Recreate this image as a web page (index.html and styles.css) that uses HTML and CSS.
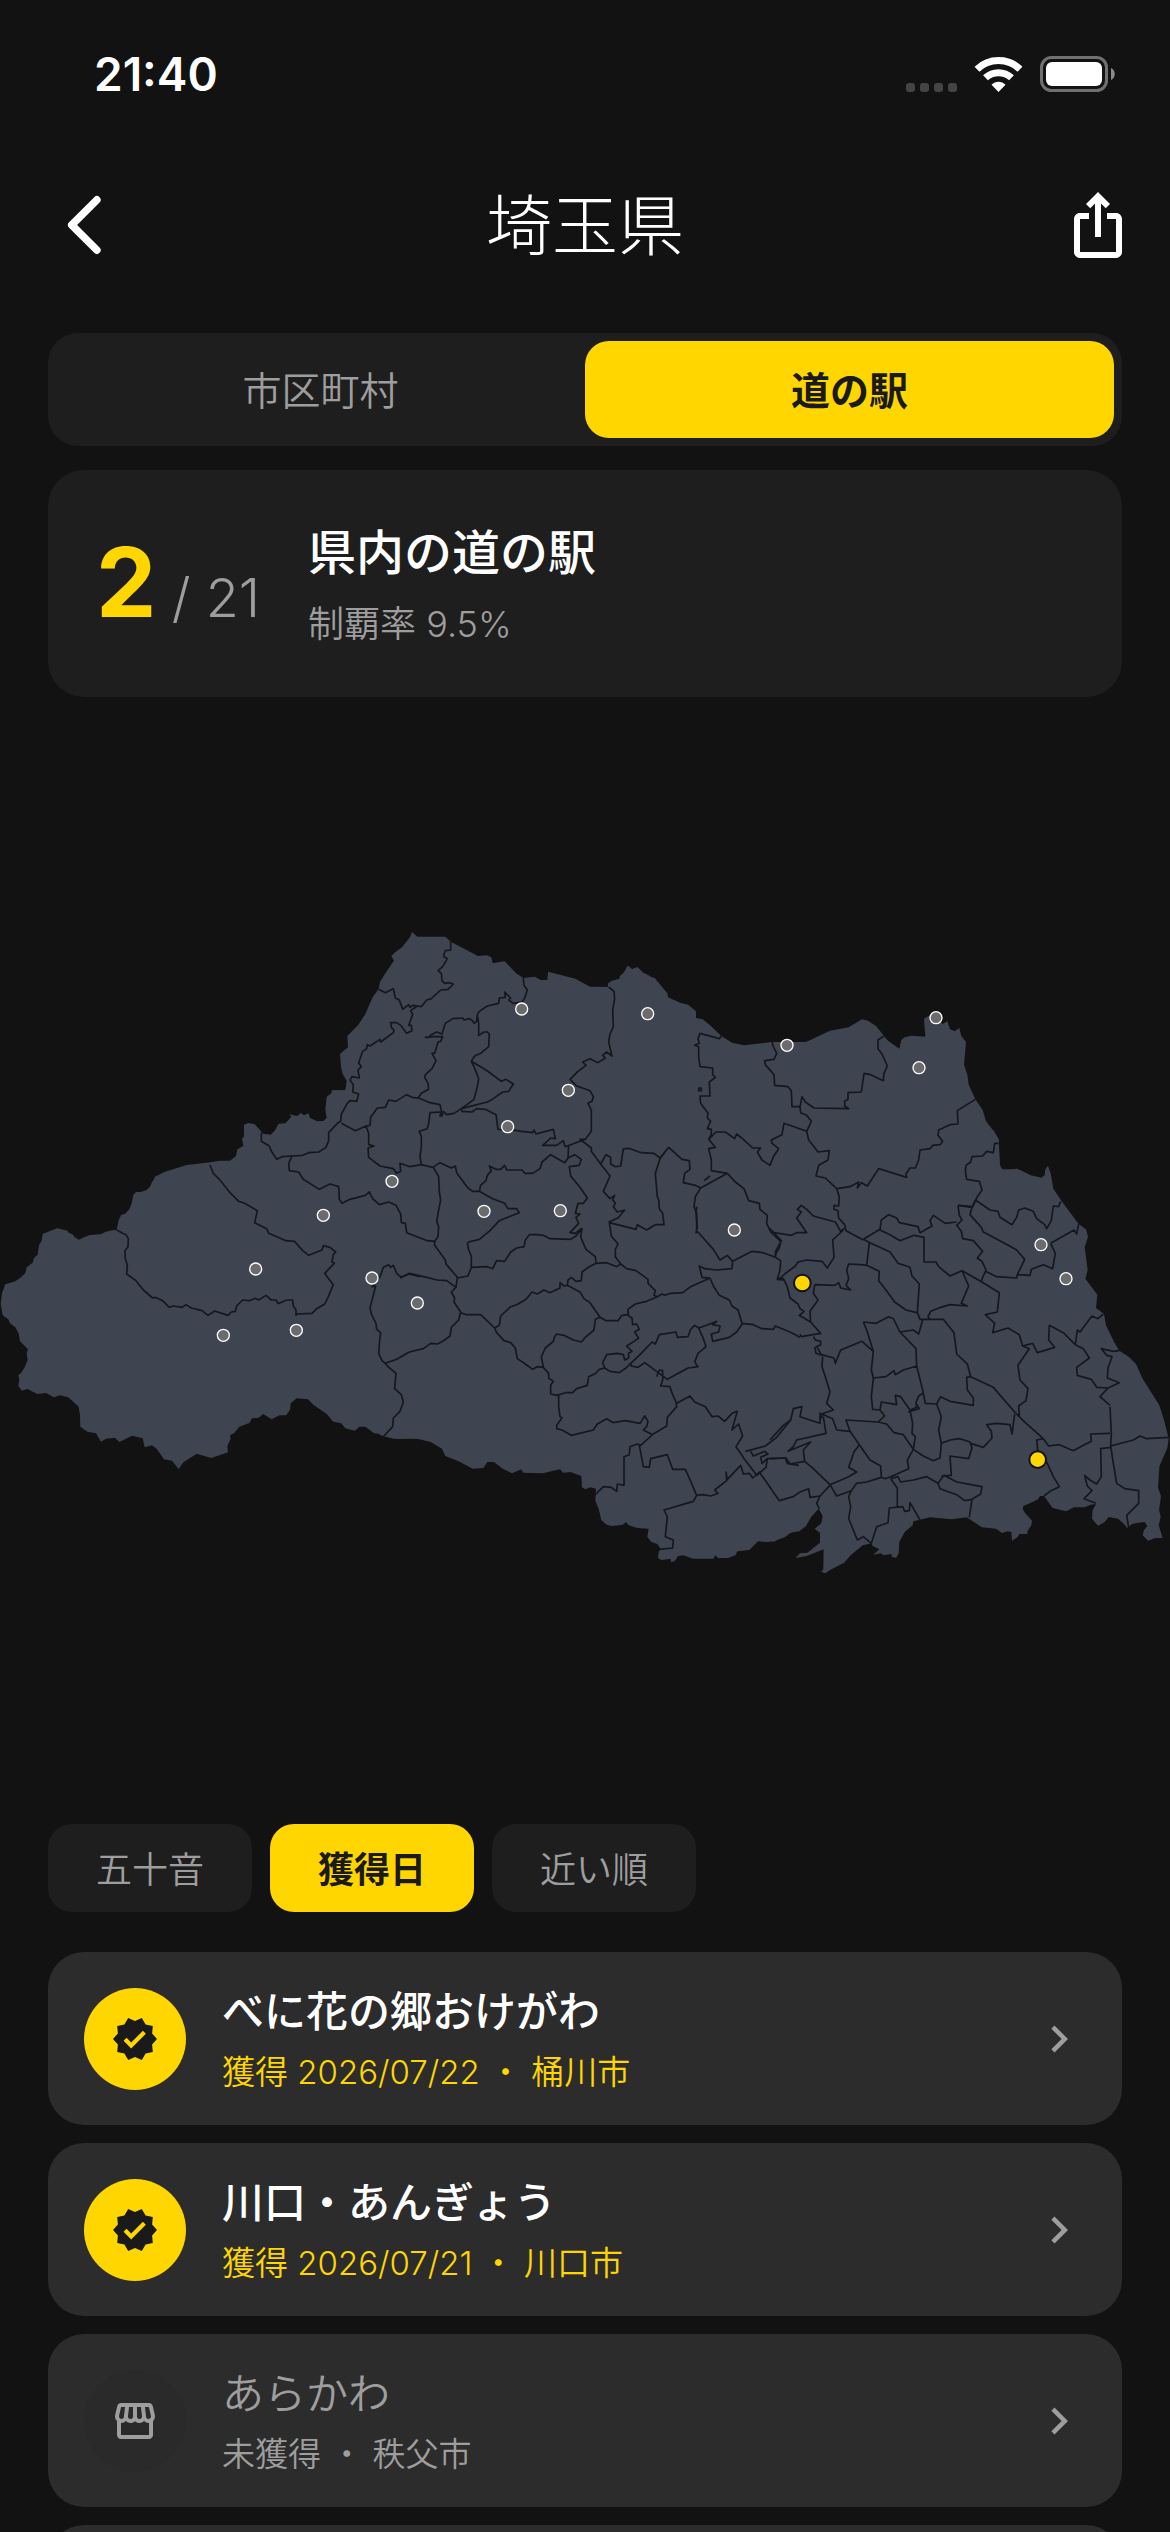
FILE: index.html
```
<!DOCTYPE html>
<html lang="ja">
<head>
  <meta charset="UTF-8">
  <meta name="viewport" content="width=device-width, initial-scale=1.0">
  <title>埼玉県</title>
  <link rel="stylesheet" href="styles.css">
</head>
<body>
  <div class="app">
    <div class="status-bar">
      <span class="time">21:40</span>
      <div class="status-icons">
        <svg class="dots" viewBox="0 0 51 36">
          <rect x="0" y="27" width="9" height="9" rx="3"/>
          <rect x="14" y="27" width="9" height="9" rx="3"/>
          <rect x="28" y="27" width="9" height="9" rx="3"/>
          <rect x="42" y="27" width="9" height="9" rx="3"/>
        </svg>
        <svg class="wifi" viewBox="0 0 49 36">
          <path d="M3 13.200A31 31 0 0 1 46 13.200" stroke-width="7"/>
          <path d="M11.500 21.800A19 19 0 0 1 37.500 21.800" stroke-width="7"/>
          <path class="solid" d="M24.500 36l-7-7.200c3.800-4.200 10.200-4.200 14 0z"/>
        </svg>
        <svg class="battery" viewBox="0 0 76 36">
          <rect class="shell" x="1.500" y="1.500" width="65" height="33" rx="10"/>
          <rect x="6" y="6" width="56" height="24" rx="6" fill="#fff"/>
          <path d="M71 12c5 2 5 10 0 12z" fill="#8a8a8a"/>
        </svg>
      </div>
    </div>

    <header class="header">
      <button class="icon-btn" aria-label="戻る">
        <svg viewBox="0 0 24 24"><path class="chevron" d="M16.300 3.600L7.900 12l8.400 8.400"/></svg>
      </button>
      <h1>埼玉県</h1>
      <button class="icon-btn share" aria-label="共有">
        <svg viewBox="0 0 24 24"><path fill="#fff" d="M16 5l-1.420 1.420-1.590-1.590V16h-1.980V4.830L9.420 6.420 8 5l4-4 4 4zm4 5v11c0 1.100-.9 2-2 2H6c-1.110 0-2-.9-2-2V10c0-1.110.89-2 2-2h3v2H6v11h12V10h-3V8h3c1.100 0 2 .89 2 2z"/></svg>
      </button>
    </header>

    <div class="tabs">
      <button class="tab">市区町村</button>
      <button class="tab active">道の駅</button>
    </div>

    <section class="summary">
      <p class="count"><strong>2</strong> / 21</p>
      <div>
        <h2>県内の道の駅</h2>
        <p class="rate">制覇率 9.5%</p>
      </div>
    </section>

    <svg class="map" viewBox="0 0 3510 3381" role="img" aria-label="埼玉県の地図">
      <g class="land">
        <path transform="translate(0 1449)" d="M460 0 455 8 450 20 440 30 422 36 408 36 400 45 395 70 388 88 375 102 364 104 356 120 350 150 337 151 318 155 302 163 270 165 252 172 237 179 224 172 218 163 206 158 202 152 172 145 150 153 128 162 125 182 117 195 113 224 102 234 98 248 80 262 76 279 63 292 46 304 16 313 6 340 2 372 8 406 25 418 30 430 46 442 56 460 60 484 84 508 80 520 83 540 74 562 64 578 55 586 58 600 55 618 66 632 82 627 112 642 138 639 162 652 180 646 205 652 236 680 240 705 241 740 262 755 288 760 303 785 318 776 345 773 358 786 396 767 428 775 434 802 456 796 470 806 492 838 516 842 536 867 550 847 590 821 634 834 684 817 682 798 692 776 690 766 702 760 718 740 748 729 756 715 776 713 790 702 815 718 838 706 858 706 870 690 872 670 890 655 924 658 940 674 980 702 1000 725 1024 730 1036 745 1064 752 1078 740 1096 740 1122 760 1140 762 1152 768 1196 777 1230 774 1260 777 1260 0Z"/>
        <path transform="translate(690 639)" d="M-230 812 -225 800 -195 785 -130 765 -70 758 -30 752 0 752 18 738 22 718 40 708 36 686 42 680 42 644 56 639 74 643 90 660 98 671 122 674 134 662 146 641 166 640 184 620 178 612 190 616 202 618 212 609 222 616 236 610 240 624 262 634 280 633 290 624 286 600 290 560 304 550 306 541 346 540 350 512 338 492 333 470 330 432 344 420 354 412 352 378 385 344 405 314 428 262 446 236 450 216 470 184 492 152 484 138 494 128 516 112 530 94 540 82 546 66 562 80 646 80 662 95 744 138 770 136 784 142 788 160 824 154 858 190 880 204 914 200 932 210 952 210 954 185 1036 206 1080 230 1136 231 1144 220 1168 208 1190 174 1196 168 1206 178 1222 172 1240 188 1260 198 1260 1020 -230 1020Z"/>
        <path transform="translate(1800 699)" d="M0 172 24 170 24 160 36 152 58 146 60 138 74 126 82 108 96 118 112 112 134 134 164 144 202 190 204 202 240 218 264 224 288 244 288 264 308 268 330 286 364 318 396 338 432 346 516 336 618 336 690 302 746 292 786 268 804 272 828 288 852 318 864 332 898 356 904 330 914 322 934 317 976 320 972 266 990 256 1008 262 1028 282 1042 274 1050 298 1064 304 1078 294 1084 318 1098 336 1092 404 1102 434 1106 464 1126 508 1148 540 1158 574 1174 594 1196 628 1200 706 1208 720 1252 716 1290 738 1320 742 1320 990 0 990Z"/>
        <path transform="translate(1140 1509)" d="M0 705 40 716 112 716 152 726 186 746 196 768 236 784 278 806 310 804 322 786 342 786 368 806 396 820 424 808 430 818 488 820 540 808 550 818 572 816 604 828 606 862 616 868 632 862 648 866 646 902 656 926 664 960 680 974 696 978 728 974 738 966 746 976 772 984 806 986 802 1010 814 1026 832 1032 842 1046 836 1056 834 1074 844 1080 872 1076 872 1086 884 1084 894 1068 910 1066 940 1076 1000 1076 1006 1066 1014 1074 1044 1074 1066 1066 1072 1054 1108 1050 1134 1024 1160 1026 1180 1024 1214 1012 1230 1000 1260 990 1260 0 0 0Z"/>
        <path transform="translate(2310 1299)" d="M670 0 686 28 688 104 696 118 750 120 782 136 814 143 824 136 826 118 834 108 842 130 850 176 874 212 926 282 948 298 954 320 944 352 953 420 946 446 982 494 978 534 1002 552 1008 586 1032 636 1048 662 1076 680 1098 702 1118 746 1168 826 1182 870 1196 926 1192 954 1172 1000 1168 1010 1164 1074 1173 1098 1167 1140 1172 1160 1166 1186 1178 1224 1156 1224 1134 1232 1118 1216 1122 1200 1132 1188 1124 1176 1106 1178 1086 1182 1072 1194 1058 1178 1044 1166 1016 1161 1004 1176 984 1187 966 1166 968 1140 978 1122 962 1124 944 1132 912 1132 888 1144 848 1134 822 1098 810 1098 804 1108 788 1116 760 1128 758 1138 766 1150 786 1172 784 1186 772 1204 772 1212 748 1212 742 1222 726 1232 724 1206 712 1204 696 1209 678 1196 636 1192 590 1162 544 1168 480 1162 430 1174 428 1186 404 1206 388 1236 386 1270 378 1284 366 1280 364 1272 340 1276 332 1270 310 1274 328 1258 308 1248 304 1240 278 1246 242 1276 222 1298 180 1320 166 1330 154 1326 160 1316 161 1258 110 1278 76 1284 90 1270 112 1268 150 1238 150 1208 134 1196 154 1180 158 1158 146 1136 124 1160 108 1188 88 1204 64 1206 36 1222 10 1236 0 1228 0 0Z"/>
      </g>

      <g class="borders">
        <!-- chichibu side -->
        <path transform="translate(0 1449)" d="M350 150 368 160 378 164 385 176 384 200 375 212 376 236 382 256 380 282 408 302 430 330 458 354 466 352 488 362 508 382 520 378 546 382 558 374 574 384 606 392 624 406 644 393 684 406 694 396 706 394 710 378 728 360 748 362 766 355 776 360 798 346 814 360 828 360 834 371 860 360 878 360 880 378 888 390 888 406 892 402 936 400 950 386 974 372 984 352 1000 314 986 296 974 280 1003 250 996 246 1000 224 1007 216 990 202 970 197 966 210 926 226 908 212 884 184 858 182 806 160 800 146 764 128 772 92 734 70 716 64 690 38 660 0 640 -20 630 -45
          M1260 290 1228 282 1204 292 1190 280 1180 256 1172 262 1166 254 1150 262 1140 290 1116 320 1127 318 1110 384 1114 402 1128 430 1130 448 1142 458 1139 480 1136 520 1146 542 1156 550 1164 560 1188 580 1184 626 1204 644 1210 666 1200 694 1180 714 1178 740 1152 768"/>
        <!-- north-west -->
        <path transform="translate(690 639)" d="M94 668 94 694 118 708 124 724 140 748 156 740 186 738 218 736 236 728 266 726 288 712 296 692 296 668 322 640 332 634 334 612 352 580 360 572 380 574 386 552 368 546 370 524 360 510 366 500 388 504 384 480 394 470 386 458 398 424 410 416 412 404 420 408 450 388 452 396 490 368 492 360 484 352 482 338 500 338 512 346 530 370 546 362 544 346 536 346 548 314 542 302 562 288
          M446 238 466 248 490 236 496 264 508 270 518 298 536 284 540 292 548 286 562 288 574 290 590 270 604 266 632 240 654 238 670 222 660 218 644 220 636 212 634 190 624 182 638 170 652 146 642 140 642 132 646 122 662 120 662 95
          M880 204 882 226 892 240 884 264 876 276 850 280 836 270 842 264 824 246 826 262 808 264 806 280 772 288 748 304 742 314 740 334 732 340 728 332 718 326 702 330 698 324 668 326 646 340 636 372 620 366 604 374 596 382 586 382 610 380 638 380 632 394 624 396 614 430 606 430 618 452 606 476 586 494 584 502 594 520 596 538 574 550 566 562
          M742 314 746 340 746 376 762 366 772 366 778 372 776 410 752 430 734 438 724 454 732 470 746 506 742 530 732 568 694 596 672 610 650 614 640 604 636 618 630 618 634 602 630 584 600 578 566 564 546 562 530 554 498 574 476 570 466 592 442 594 422 622 420 646 408 648 376 662 334 640
          M724 454 768 480 814 514 828 508 850 522 836 544 818 546 790 566 772 576 694 596 696 604 726 606 740 596 766 598 798 614 804 658 848 660 874 664 908 668 912 660 918 672 970 658 976 686 962 684 938 706 980 706 1000 692 1006 710 1066 688
          M408 648 416 670 416 704 432 708 414 714 416 742 450 768 490 776 500 790 512 784 510 760 540 770 574 764 608 772 630 758 664 774 676 768 680 788 712 832 728 844 748 844
          M636 618 630 606 600 608 596 640 592 656 568 664 574 680 574 710 570 740 574 764
          M748 844 752 826 768 812 772 796 784 782 778 768 798 778 812 778 824 766 830 780 876 780 884 790 908 790 930 776 936 756 962 734 1004 758 1014 744 1034 734 1054 748 1048 766 1018 770 1022 798 1050 832 1072 864 1060 880 1044 880 1036 910 1050 912 1038 922 1046 940 1020 968 1036 970 1054 956M1016 706 1014 744
          M1136 231 1152 244 1154 266 1148 300 1150 350 1140 372 1136 396 1146 438 1130 426 1118 436 1126 444 1104 458 1080 446 1058 456 1068 466 1044 484 1020 508 1040 528 1064 536 1080 542 1090 560 1086 574 1074 580 1084 600 1084 664 1066 688 1050 688 1084 714 1084 724 1112 762 1128 734 1142 742 1142 762 1156 770 1172 768 1180 716
          M1112 762 1140 798 1120 844 1140 866 1154 856 1148 870 1156 880 1150 890 1162 906 1184 900 1164 924 1136 936
          M186 738 176 760 178 782 206 786 220 808 268 838 300 822 326 830 328 868 336 880 360 868 406 856 418 846 428 866 448 884 476 876 498 886 512 912 514 938 526 940 530 968 592 992 614 994 624 980 626 950 620 934 626 900 632 870 628 846 626 800 610 772
          M748 844 788 866 824 880 834 896 860 896 868 908 808 932 780 962 748 988 716 996 712 1000"/>
        <!-- north -->
        <path transform="translate(1800 699)" d="M364 318 358 326 300 310 294 326 298 340 284 346 296 350 296 380 300 410 338 414 338 434 346 442 328 456 330 498 300 498 302 520 324 550 322 564 332 574 322 596 334 598 334 612 326 628 348 606 376 606 404 626 410 612 430 628 458 654 482 654 472 666 486 690 510 706 520 680 536 656 516 640 514 630 546 614 552 580 620 604
          M516 336 520 350 530 370 522 388 494 392 496 404 522 434 524 466 564 470 574 482 576 530 600 530 606 500 616 516 642 534 746 536 734 528 734 514 744 508 744 488 784 486 792 430 812 434 850 452 852 430 862 408 846 372 834 356 834 330 852 318
          M600 530 602 548 620 556 634 574 620 604 626 630 654 666 688 662 684 690 656 706 648 738 676 744 710 776 718 800 716 828 702 826 702 838 714 842 716 864 734 884 738 902 790 930
          M326 628 346 652 326 656 334 690 334 722 382 730 406 756 432 776 446 812 478 820 480 838 502 856 500 880 512 906 542 934 538 954 524 976
          M382 730 302 774 286 766 250 758 254 730 270 718 268 692 246 688 206 652 180 686 166 730 172 800 176 810M302 774 286 800 282 830 290 850 290 900
          M70 656 90 656 124 668 162 670 180 684 206 652M312 752 330 738M296 474 304 474 304 482 296 482Z
          M710 776 750 770 776 756 772 774 784 758 802 768 836 716 920 742 918 732 930 714 946 714 956 690 960 660 990 656 998 646 1020 644 1028 634 1014 616 1016 600 1050 584 1074 582 1072 542 1126 508
          M1196 640 1184 640 1180 668 1160 664 1148 678 1116 680 1112 696 1098 706 1096 722 1100 748 1138 754 1146 780 1132 800 1118 830 1074 826
          M512 906 574 916 590 908 620 908 590 864 604 846 592 838 604 826 620 838 640 858 706 876 722 904 736 892"/>
        <!-- centre and south -->
        <path transform="translate(1140 1509)" d="M164 124 164 136 196 180 198 192 232 232 228 262 214 276 224 294 222 306 242 336 236 360 214 382 210 408 188 424 172 432 152 430 130 446 88 456 50 478 16 490
          M262 130 266 150 274 168 274 202 264 228 232 234M274 202 322 200 338 206 350 182 374 184 392 156 410 144 432 140 436 120 448 104 472 104 490 106 510 116 572 118 588 108 606 86 602 110 610 130 618 148 646 170 648 190
          M60 234 88 220 140 232 172 240 200 242 228 262
          M242 338 260 344 302 344 344 384 350 398 372 422 392 428 406 444 412 476 436 492 458 508 472 500 490 502
          M344 384 358 376 362 348 392 320 410 314 438 298 456 276 472 282 492 270 510 278 540 264 540 248 552 258 562 256 564 240 574 232 588 244 604 242 606 216 628 200 648 190 680 188 710 200 722 192
          M562 256 600 276 612 296 630 308 660 352 646 358 642 390 616 412 604 426 580 420 552 406 530 402 524 410 520 424 496 444 484 470 490 502 506 520 506 534 520 544 512 556 512 582 532 586 556 578 578 578 590 566 622 556 626 530 648 520 658 508 674 504 690 514 718 518 738 504 752 490
          M674 504 668 488 680 464 712 460 730 464 734 480 746 474 746 460 756 454 740 438 762 424 776 414 764 396 778 388 770 372 758 374 756 354 746 348 744 332
          M660 352 678 362 714 362 726 346 744 344 744 328 766 312 800 304 832 290 822 286 826 272 804 250 804 238 768 212 740 206 722 192
          M832 290 846 282 854 286 872 280 908 278 932 260 990 234
          M722 192 706 170 706 148 714 132 694 108 688 68 768 88 772 74 800 90 826 74 852 74 848 40 838 26 836 0
          M752 490 780 464 816 426 826 432 838 404 888 396 892 412 924 410 932 388 944 376 956 384 970 416 978 440 954 460 944 486 954 500 924 504 862 538 846 526 794 488 774 502 754 498 752 490
          M956 384 984 374 1010 364 998 374 1020 378 1016 396 994 402 998 424 1048 412 1070 396 1088 370
          M990 234 966 232 958 198 974 206 1010 210 1056 206 1058 184 1042 166 1020 180 1000 148 954 96 948 98 952 80 948 40 950 20
          M1058 184 1116 154 1150 158 1186 172 1202 182 1200 210 1192 238 1212 240M1188 170 1186 156 1204 122 1168 84
          M990 234 1000 258 1018 286 1048 300 1056 318 1074 330 1086 370 1120 374 1146 386 1180 388 1186 378 1230 396 1260 412
          M830 530 838 510 848 512 848 540 842 558 870 560 878 584 888 606 890 620 862 652 860 678 820 702 782 736 772 732 750 740 748 764 732 770 732 856 712 852 710 874 694 862 670 860 646 884
          M536 586 536 620 540 650 546 654 530 676 530 686 546 690 574 706 640 690 652 672 680 656 700 668 736 662 780 670 794 648 804 664 800 680 790 690 818 704
          M778 736 790 800 808 802 812 776 862 764 878 808 916 808 926 830 950 886
          M890 610 930 588 944 606 976 620 996 650 1014 648 1034 664 1056 640 1072 634 1056 690 1076 672 1088 708 1068 740 1090 772
          M950 886 940 904 852 930 862 950 856 1010 880 1020 878 1044 838 1048
          M950 886 970 884 992 888 1014 880 1004 870 1040 842 1038 816 1042 838 1082 796 1090 822 1108 820 1118 834 1138 816 1198 902 1240 890 1260 876
          M1088 770 1130 826 1158 802 1162 776 1146 790 1142 772 1164 762 1154 754 1120 768 1112 754M1162 776 1216 774 1222 790 1256 796
          M1096 754 1156 738 1190 712 1232 660"/>
        <!-- east -->
        <path transform="translate(2310 1299)" d="M616 210 660 240 684 244 690 262 726 284 740 262 746 240 764 234 790 244 800 266 824 284 830 296 844 272 850 228 866 230 872 214
          M842 340 912 300 920 312 926 282M842 340 856 370 848 416 820 404 784 418 780 436 742 434 740 444 680 440 646 424
          M606 232 600 254 634 292 640 306 712 344 740 360 764 388 742 434M564 226 606 232 616 210
          M564 226 568 256 576 270 560 286 574 304 578 326 610 332 638 364 622 384 636 394 648 420 634 452
          M560 276 526 280 490 256 480 272 486 288 450 308 444 290 388 278 380 264 356 254 334 270 330 298 280 328
          M330 300 360 314 390 332 432 316 462 322 462 396 498 396 506 410 540 438 576 422 632 454 688 488 682 546 646 554 674 580 668 608 714 594 748 614 758 648 788 640 802 668 854 652 836 630 838 586 880 608 916 644 922 600 930 606 966 558 984 566 1000 552
          M576 422 596 468 574 520 592 528 540 524 512 532 482 544 474 560 480 568
          M280 328 300 338 360 366 384 400 420 412 426 438 448 462 442 548 450 568 520 568 552 608 560 672 592 702 602 740 670 772 734 846 766 878 820 926
          M298 338 290 406 328 424 326 452 348 480 374 516 408 540 440 548
          M290 406 272 404 236 402 230 420 236 446 228 466 242 480 212 474 206 458 194 466 134 464
          M30 446 44 432 76 408 84 396 110 390 156 394 172 414 192 382 188 330 220 300M22 444 40 446 52 470 60 504 84 522 90 536 102 544 88 556 122 576 120 544 144 510 130 490 134 464
          M122 576 152 610 94 620 90 612M130 620 136 630 152 634 152 644 140 650 154 674 192 684 196 700 212 660 276 634 310 664
          M158 680 156 710 166 740 180 786 170 820 190 840 160 850 150 870M134 650 138 670 156 676
          M280 576 318 580 356 560 370 566 390 606 438 656 440 708 400 720 376 734 372 722 348 740 310 744 304 720 310 664 290 600 280 576M390 606 430 600 446 612 458 570
          M440 708 458 780 466 820 500 822 512 800 540 814 610 826 610 804 592 780 590 742 602 740
          M310 744 304 800 308 838 330 840 334 816 380 824 376 796 392 800 420 840 440 832 438 818 446 798 458 790M438 820 448 836 414 846
          M330 840 344 858 324 876 228 870 240 904 268 944 300 990 332 1008 334 1042 345 1046 362 1040 416 1016 412 990 430 958 400 914 372 908 350 882 324 876
          M420 840 428 880 426 910 436 920 430 958 460 978 490 992 510 984 514 940 506 900 514 860 500 822
          M514 940 540 930 570 926 600 936 606 954 596 986 540 978 544 1036 514 1038M600 940 614 944 640 952 666 924 664 904 650 884 680 880 720 884 726 912 734 852
          M240 904 200 900 188 866 150 850 150 880 90 860 96 830 70 836 62 870 40 886 0 930
          M160 860 168 910 80 930 70 950 54 964 122 936 100 960 104 994 130 1016 180 1064 236 1040 260 1026 236 1012 252 966 268 944M0 986 48 984 60 1002 104 994
          M820 926 800 930 804 970 832 1000 850 1040 868 1070 840 1084 822 1098M820 926 836 948 868 944 910 962 940 946 964 934 962 912 1020 910
          M758 648 778 656 744 706 750 750 774 776 768 812 746 828 748 858M1020 830 1024 910 1022 948 1030 1000 1040 1060 1064 1076 1106 1082 1106 1120 1070 1156 1076 1192
          M1022 948 1090 930 1110 918 1130 926 1196 922M1022 952 992 956 994 1040 980 1062 960 1050 944 1036 952 1068 966 1082 942 1106 978 1120
          M916 644 940 656 958 684 920 712 922 736 964 748 980 772 1014 774 1048 758 1012 744 1014 714 1026 680 1010 676 994 656 1030 664 1048 662M1014 774 990 800 1020 826
          M180 1064 200 1098 244 1082 260 1060 290 1056 334 1042M90 1086 116 1076 120 1102 150 1098 182 1064M150 1098 140 1120 148 1136
          M244 1082 236 1100 242 1130 236 1166 250 1200 262 1230 280 1220 304 1240 320 1190 354 1178 358 1134 398 1130 404 1144 418 1142 420 1118 434 1142 450 1170
          M362 1046 382 1074 382 1132M362 1046 384 1040 392 1056 430 1050 470 1040 504 1060 522 1036 560 1056 636 1070 632 1092 606 1108 584 1112 560 1094 510 1076 504 1060M606 1108 598 1162"/>
      </g>

      <g class="pins">
        <circle cx="970" cy="1555" r="18"/>
        <circle cx="767" cy="1716" r="18"/>
        <circle cx="1116" cy="1743" r="18"/>
        <circle cx="670" cy="1915" r="18"/>
        <circle cx="889" cy="1900" r="18"/>
        <circle cx="1565" cy="936" r="18"/>
        <circle cx="1705" cy="1180" r="18"/>
        <circle cx="1523" cy="1289" r="18"/>
        <circle cx="1176" cy="1453" r="18"/>
        <circle cx="1452" cy="1543" r="18"/>
        <circle cx="1681" cy="1541" r="18"/>
        <circle cx="1943" cy="950" r="18"/>
        <circle cx="2361" cy="1045" r="18"/>
        <circle cx="2808" cy="962" r="18"/>
        <circle cx="2757" cy="1112" r="18"/>
        <circle cx="2203" cy="1599" r="18"/>
        <circle cx="1252" cy="1818" r="18"/>
        <circle cx="3123" cy="1643" r="18"/>
        <circle cx="3198" cy="1745" r="18"/>
        <circle class="visited" cx="2407" cy="1758" r="25"/>
        <circle class="visited" cx="3113" cy="2288" r="25"/>
      </g>
    </svg>

    <div class="sort">
      <button class="chip">五十音</button>
      <button class="chip active">獲得日</button>
      <button class="chip">近い順</button>
    </div>

    <ul class="stations">
      <li class="station got">
        <span class="badge">
          <svg viewBox="0 0 24 24"><path d="M23 12l-2.440-2.790.34-3.690-3.610-.82-1.890-3.200L12 2.960 8.600 1.500 6.710 4.690 3.100 5.500l.34 3.700L1 12l2.440 2.790-.34 3.700 3.610.82L8.600 22.500l3.400-1.470 3.400 1.460 1.890-3.190 3.610-.82-.34-3.690L23 12zm-12.910 4.720l-3.800-3.810 1.480-1.480 2.320 2.330 5.850-5.870 1.480 1.480-7.330 7.350z"/></svg>
        </span>
        <div class="info">
          <h3>べに花の郷おけがわ</h3>
          <p>獲得 2026/07/22 ・ 桶川市</p>
        </div>
        <svg class="next" viewBox="0 0 24 24"><path d="M10 6L8.590 7.410 13.170 12l-4.580 4.590L10 18l6-6z"/></svg>
      </li>
      <li class="station got">
        <span class="badge">
          <svg viewBox="0 0 24 24"><path d="M23 12l-2.440-2.790.34-3.690-3.610-.82-1.890-3.200L12 2.960 8.600 1.500 6.710 4.690 3.100 5.500l.34 3.700L1 12l2.440 2.790-.34 3.700 3.610.82L8.600 22.500l3.400-1.470 3.400 1.460 1.890-3.190 3.610-.82-.34-3.690L23 12zm-12.910 4.720l-3.800-3.810 1.480-1.480 2.320 2.330 5.850-5.870 1.480 1.480-7.330 7.350z"/></svg>
        </span>
        <div class="info">
          <h3>川口・あんぎょう</h3>
          <p>獲得 2026/07/21 ・ 川口市</p>
        </div>
        <svg class="next" viewBox="0 0 24 24"><path d="M10 6L8.590 7.410 13.170 12l-4.580 4.590L10 18l6-6z"/></svg>
      </li>
      <li class="station">
        <span class="badge">
          <svg viewBox="0 0 24 24"><path d="M21.900 8.890l-1.050-4.370c-.22-.9-1-1.520-1.910-1.520H5.050c-.9 0-1.690.63-1.900 1.520L2.100 8.890c-.24 1.020-.02 2.060.62 2.880.8.110.19.190.28.290V19c0 1.100.9 2 2 2h14c1.100 0 2-.9 2-2v-6.940c.09-.09.2-.18.28-.28.640-.82.870-1.870.62-2.890zM18.910 4.990l1.050 4.370c.1.420.010.840-.25 1.170-.14.180-.44.470-.94.470-.61 0-1.140-.49-1.210-1.140L16.980 5l1.930-.01zM13 5h1.960l.54 4.520c.05.390-.07.780-.33 1.070-.22.260-.54.410-.95.410-.67 0-1.220-.59-1.220-1.310V5zM8.490 9.520L9.040 5H11v4.690c0 .72-.55 1.310-1.290 1.310-.34 0-.65-.15-.89-.41-.25-.29-.37-.68-.33-1.070zM4.040 9.360L5.050 5h1.970l-.58 4.860c-.08.650-.6 1.140-1.210 1.140-.49 0-.8-.29-.93-.47-.27-.32-.36-.75-.26-1.170zM5 19v-6.030c.08.010.15.030.23.030.87 0 1.660-.36 2.240-.95.6.6 1.400.95 2.310.95.87 0 1.650-.36 2.230-.93.59.57 1.390.93 2.290.93.84 0 1.640-.35 2.240-.95.58.590 1.370.95 2.240.95.08 0 .15-.02.23-.03V19H5z"/></svg>
        </span>
        <div class="info">
          <h3>あらかわ</h3>
          <p>未獲得 ・ 秩父市</p>
        </div>
        <svg class="next" viewBox="0 0 24 24"><path d="M10 6L8.590 7.410 13.170 12l-4.580 4.590L10 18l6-6z"/></svg>
      </li>
      <li class="station"></li>
    </ul>
  </div>
</body>
</html>
```
FILE: styles.css
```
* {
  box-sizing: border-box;
}

body {
  font-family: Inter, "Noto Sans CJK JP", sans-serif;
  font-weight: 350;
  margin: 0;
  background-color: #121212;
  color: #fff;
}

h1, h2, h3, p, ul {
  margin: 0;
  padding: 0;
}

button {
  border: none;
  padding: 0;
  background: none;
  font-family: inherit;
  font-weight: inherit;
  color: #9e9e9e;
  cursor: pointer;
}

svg {
  display: block;
}

.app {
  height: 100vh;
  overflow: hidden;
}

.status-bar {
  display: flex;
  align-items: center;
  justify-content: space-between;
  height: 141px;
  padding: 6px 54px 0 94px;
}

.time {
  font-size: 46px;
  font-weight: 600;
}

.status-icons {
  display: flex;
  align-items: center;
  gap: 17px;
}

.status-icons svg {
  height: 36px;
}

.dots {
  fill: #444;
}

.wifi {
  fill: none;
  stroke: #fff;
}

.wifi .solid {
  fill: #fff;
  stroke: none;
}

.battery .shell {
  fill: none;
  stroke: #707070;
  stroke-width: 3;
}

.header {
  display: grid;
  grid-template-columns: 1fr auto 1fr;
  align-items: center;
  height: 168px;
  padding: 0 36px 0 36px;
}

.header h1 {
  padding-bottom: 8px;
  font-size: 66px;
  font-weight: 300;
}

.icon-btn {
  justify-self: start;
  padding-left: 12px;
}

.icon-btn.share {
  justify-self: end;
}

.icon-btn svg {
  width: 72px;
  height: 72px;
}

.chevron {
  fill: none;
  stroke: #fff;
  stroke-width: 2.5;
  stroke-linecap: round;
  stroke-linejoin: round;
}

.tabs {
  display: flex;
  margin: 24px 48px;
  padding: 8px;
  border-radius: 30px;
  background-color: #1e1e1e;
}

.tab {
  flex: 1;
  height: 97px;
  padding-bottom: 4px;
  border-radius: 24px;
  font-size: 39px;
}

.tab.active,
.chip.active {
  background-color: #ffd600;
  color: #1a1a1a;
  font-weight: 600;
}

.summary {
  display: flex;
  align-items: center;
  gap: 48px;
  height: 227px;
  margin: 0 48px;
  padding: 0 48px;
  border-radius: 36px;
  background-color: #1e1e1e;
}

.count {
  padding-bottom: 4px;
  font-size: 54px;
  color: #9e9e9e;
}

.count strong {
  font-size: 96px;
  line-height: 96px;
  color: #ffd600;
}

.summary h2 {
  font-size: 48px;
  line-height: 72px;
  font-weight: 500;
}

.rate {
  margin-top: 8px;
  font-size: 36px;
  line-height: 54px;
  color: #9e9e9e;
}

.map {
  width: 100%;
}

.land {
  fill: #3f4550;
}

.borders {
  fill: none;
  stroke: #14171d;
  stroke-width: 5;
  stroke-linejoin: round;
}

.pins {
  fill: #6b6b6d;
  stroke: #fff;
  stroke-width: 4;
}

.pins .visited {
  fill: #ffd600;
  stroke: #121212;
  stroke-width: 6;
}

.sort {
  display: flex;
  gap: 18px;
  padding: 0 48px;
}

.chip {
  height: 88px;
  padding: 0 48px 2px;
  border-radius: 24px;
  background-color: #1e1e1e;
  font-size: 36px;
}

.stations {
  display: flex;
  flex-direction: column;
  gap: 18px;
  margin: 40px 48px 0;
  list-style: none;
}

.station {
  display: flex;
  align-items: center;
  gap: 36px;
  height: 173px;
  padding: 0 36px;
  border-radius: 36px;
  background-color: #2c2c2c;
  color: #9e9e9e;
}

.badge {
  display: flex;
  align-items: center;
  justify-content: center;
  width: 102px;
  height: 102px;
  border-radius: 50%;
  background-color: #2a2a2a;
}

.badge svg {
  width: 48px;
  height: 48px;
  fill: #9e9e9e;
}

.info {
  flex: 1;
}

.info h3 {
  font-size: 42px;
  line-height: 60px;
  font-weight: 350;
}

.info p {
  font-size: 33px;
  line-height: 48px;
  margin-top: 6px;
}

.got h3 {
  color: #fff;
  font-weight: 500;
}

.got p {
  color: #ffd600;
}

.got .badge {
  background-color: #ffd600;
}

.got .badge svg {
  fill: #1a1a1a;
}

.next {
  width: 54px;
  height: 54px;
  fill: #9e9e9e;
}
```
